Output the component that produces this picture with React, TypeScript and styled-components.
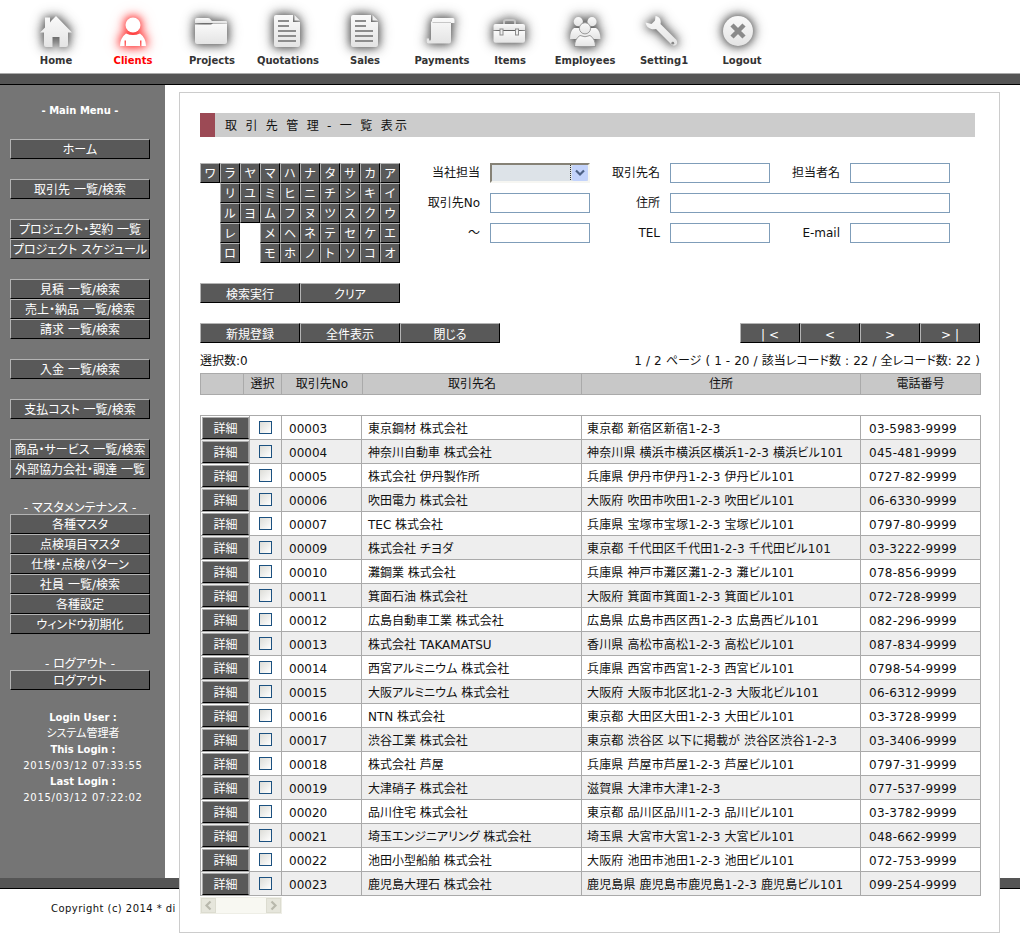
import React, { useId } from "react";
import styled, { createGlobalStyle, css } from "styled-components";

const FONT = `"DejaVu Sans", "Noto Sans CJK JP", sans-serif`;
const PALT = `font-feature-settings: "palt";`;

const Global = createGlobalStyle`
  html, body { margin: 0; padding: 0; background: #fff; overflow: hidden; }
  body { font-family: ${FONT}; font-size: 12px; color: #111; ${PALT} }
`;

const Page = styled.div`
  width: 1020px;
  height: 940px;
  display: flex;
  flex-direction: column;
  overflow: hidden;
`;

const Nav = styled.nav`
  height: 73px;
  flex: none;
  display: flex;
  padding-left: 18px;
  border-bottom: 1px solid #aaa;
`;
const NavItem = styled.a<{ $w: number; $active?: boolean }>`
  width: ${(p) => p.$w}px;
  display: flex;
  flex-direction: column;
  align-items: center;
  padding-top: 8px;
  font: bold 10px ${FONT};
  color: ${(p) => (p.$active ? "#f00" : "#333")};
`;
const NavLabel = styled.span`
  margin-top: -1px;
  line-height: 12px;
  white-space: nowrap;
`;
const IconSvg = styled.svg<{ $active?: boolean }>`
  width: 48px;
  height: 48px;
  overflow: visible;
  filter: ${(p) =>
    p.$active
      ? "drop-shadow(0 0 4px #ff2828) drop-shadow(0 0 6px #ff6464)"
      : "drop-shadow(0 0 4px #5a5a5a) drop-shadow(0 0 6px #909090)"};
`;

const Bar = styled.div`
  height: 10px;
  flex: none;
  background: #555;
  border-bottom: 1px solid #000;
`;
const Body = styled.div`
  flex: none;
  height: 793px;
  display: flex;
  align-items: flex-start;
`;
const Sidebar = styled.aside`
  width: 165px;
  height: 793px;
  flex: none;
  box-sizing: border-box;
  background: #757575;
  padding: 17px 15px 0 10px;
  color: #fff;
  text-align: center;
`;
const SideHead = styled.div`
  height: 17px;
  font: bold 10px/17px ${FONT};
  ${PALT}
  margin-bottom: 20px;
`;
const SideTitle = styled.div<{ $mt: number }>`
  height: 14px;
  line-height: 16px;
  margin-top: ${(p) => p.$mt}px;
  white-space: nowrap;
`;
const MenuGroup = styled.div<{ $mt?: number }>`
  display: flex;
  flex-direction: column;
  margin-top: ${(p) => p.$mt ?? 0}px;
`;
const bevel = css`
  box-sizing: border-box;
  margin: 0;
  padding: 2px 0 0;
  background: #595959;
  color: #fff;
  border: 1px solid;
  border-color: #b4b4b4 #000 #000 #b4b4b4;
  font: 12px ${FONT};
  ${PALT}
  white-space: nowrap;
  text-align: center;
  overflow: hidden;
`;
const MenuButton = styled.button`
  ${bevel}
  width: 140px;
  height: 20px;
  line-height: 17px;
`;
const Info = styled.div`
  margin: 20px 0 0 6px;
  font-size: 11px;
  line-height: 16px;
`;
const InfoHead = styled.div`
  font: bold 10px/16px ${FONT};
`;
const InfoDate = styled.div`
  font-size: 10px;
  letter-spacing: 0.72px;
  white-space: nowrap;
`;

const Panel = styled.main`
  position: relative;
  z-index: 1;
  width: 821px;
  height: 841px;
  margin: 7px 0 0 14px;
  box-sizing: border-box;
  background: #fff;
  border: 1px solid #ccc;
  padding: 20px 0 0 20px;
`;
const Title = styled.h1`
  margin: 0;
  width: 775px;
  height: 24px;
  box-sizing: border-box;
  background: #ccc;
  border-left: 15px solid #9c4a55;
  padding-left: 10px;
  font: normal 12px/26px ${FONT};
  ${PALT}
  letter-spacing: 2.3px;
  color: #111;
`;
const SearchRow = styled.div`
  margin-top: 26px;
  display: flex;
  gap: 20px;
`;
const KanaGrid = styled.div`
  display: grid;
  grid-template-columns: repeat(10, 20px);
  grid-auto-rows: 20px;
  flex: none;
`;
const KanaKey = styled.button`
  ${bevel}
  width: 20px;
  height: 20px;
  line-height: 16px;
`;
const KanaGap = styled.span``;
const FormGrid = styled.div`
  display: grid;
  grid-template-columns: 60px 100px 60px 100px 60px 100px;
  grid-auto-rows: 20px;
  row-gap: 10px;
  column-gap: 10px;
  align-content: start;
`;
const FieldLabel = styled.label`
  text-align: right;
  line-height: 20px;
  white-space: nowrap;
  margin-left: -10px;
`;
const TextInput = styled.input<{ $span?: number }>`
  box-sizing: border-box;
  width: 100%;
  height: 20px;
  margin: 0;
  background: #fff;
  border: 1px solid #7f9db9;
  grid-column: span ${(p) => p.$span ?? 1};
`;
const SelectWrap = styled.div`
  position: relative;
  height: 20px;
`;
const Select = styled.select`
  appearance: none;
  box-sizing: border-box;
  display: block;
  width: 100%;
  height: 20px;
  margin: 0;
  background: #dde3e8;
  border: 2px solid;
  border-color: #868276 #f6f6f2 #f6f6f2 #868276;
  border-radius: 0;
`;
const SelectArrow = styled.svg`
  position: absolute;
  top: 2px;
  right: 2px;
  width: 19px;
  height: 16px;
`;
const ButtonRow = styled.div<{ $mt: number; $split?: boolean }>`
  display: flex;
  width: 780px;
  margin-top: ${(p) => p.$mt}px;
  justify-content: ${(p) => (p.$split ? "space-between" : "flex-start")};
`;
const ButtonGroup = styled.div`
  display: flex;
`;
const ActionButton = styled.button<{ $w?: number }>`
  ${bevel}
  padding-top: 4px;
  width: ${(p) => p.$w ?? 100}px;
  height: 20px;
  line-height: 15px;
`;
const CountRow = styled.div`
  width: 780px;
  height: 20px;
  margin-top: 8px;
  margin-bottom: 2px;
  display: flex;
  justify-content: space-between;
  line-height: 20px;
  white-space: nowrap;
  word-spacing: 0.25px;
`;
const HeadTable = styled.table`
  table-layout: fixed;
  border-collapse: collapse;
  width: 780px;
  height: 21px;
  th {
    background: #c8c8c8;
    border: 1px solid #aaa;
    font: normal 12px/20px ${FONT};
    ${PALT}
    padding: 0;
    height: 20px;
  }
`;
const DataTable = styled.table`
  table-layout: fixed;
  border-collapse: collapse;
  width: 780px;
  margin-top: 20px;
`;
const Row = styled.tr<{ $alt: boolean }>`
  background: ${(p) => (p.$alt ? "#eee" : "#fff")};
  height: 24px;
`;
const Cell = styled.td<{ $pl?: number; $ls?: number }>`
  box-sizing: border-box;
  border: 1px solid #aaa;
  padding: 2px 0 0 ${(p) => p.$pl ?? 0}px;
  height: 24px;
  line-height: 20px;
  letter-spacing: ${(p) => p.$ls ?? 0}px;
  white-space: nowrap;
  overflow: hidden;
`;
const DetailCell = styled(Cell)`
  padding: 0 1px;
  text-align: center;
  line-height: 0;
`;
const DetailButton = styled.button`
  ${bevel}
  display: block;
  width: 47px;
  height: 22px;
  margin: 0;
  padding: 2px 0 0;
  line-height: 18px;
  border-color: #aaa #999 #000 #aaa;
`;
const CheckCell = styled(Cell)`
  padding: 0;
  text-align: center;
  line-height: 0;
`;
const Check = styled.input`
  appearance: none;
  box-sizing: border-box;
  display: inline-block;
  width: 13px;
  height: 13px;
  margin: 0;
  border: 1px solid #1c5180;
  background: linear-gradient(135deg, #dcdcd7, #fff);
`;
const ScrollBar = styled.div`
  width: 82px;
  height: 17px;
  margin-top: 1px;
  display: flex;
  justify-content: space-between;
  align-items: center;
  background: #f8f8f2;
  box-sizing: border-box;
  border: 1px solid #eeeee6;
`;
const ScrollBtn = styled.div`
  width: 15px;
  height: 15px;
  display: flex;
  align-items: center;
  justify-content: center;
  background: #e6e6dc;
  border: 1px solid #dcdcd0;
  box-sizing: border-box;
`;
const ScrollIcon = styled.svg`
  width: 9px;
  height: 11px;
`;
const FooterBar = styled.div`
  height: 10px;
  flex: none;
  background: #555;
  border-bottom: 1px solid #000;
`;
const Copyright = styled.footer`
  padding: 12px 0 0 51px;
  font-size: 10px;
  line-height: 16px;
  letter-spacing: 0.45px;
  white-space: nowrap;
`;

const Icon: React.FC<{ active?: boolean; children: (fill: string) => React.ReactNode }> = ({ active, children }) => {
  const id = useId().replace(/[^a-zA-Z0-9]/g, "");
  return (
    <IconSvg $active={active} viewBox="0 0 48 48">
      <defs>
        <linearGradient id={id} x1="0" y1="0" x2="0" y2="1">
          <stop offset="0" stopColor="#fafafa" />
          <stop offset="1" stopColor="#e4e4e4" />
        </linearGradient>
      </defs>
      {children(`url(#${id})`)}
    </IconSvg>
  );
};

const DocLines: React.FC = () => (
  <g stroke="#8c8c8c" strokeWidth="2">
    <path d="M14 13H25M14 18H25M14 23H32M14 28H32M14 33H32" />
  </g>
);

const icons: Record<string, React.ReactNode> = {
  Home: (
    <Icon>
      {(f) => (
        <path
          fill={f}
          d="M24 8L40 24.5H36V37Q36 39 34 39H27.5V29H20.5V39H14Q12 39 12 37V24.5H8L13 19.5V9.5H18V14.5L19.5 12.5L21 11Z"
        />
      )}
    </Icon>
  ),
  Clients: (
    <Icon active>
      {() => (
        <g fill="#fff">
          <circle cx="24" cy="17" r="7.5" />
          <path d="M11 38Q11 30 17 25.5Q24 28.5 31 25.5Q37 30 37 38H32.5V32.5H31V38H17V32.5H15.5V38Z" />
        </g>
      )}
    </Icon>
  ),
  Projects: (
    <Icon>
      {(f) => (
        <g>
          <path fill={f} d="M9 10H20Q22 10 23 12L24 13H38Q39 13 39 14V15H7V12Q7 10 9 10Z" />
          <path fill={f} d="M7 16.5H23L25 15.5H39V34Q39 36 37 36H9Q7 36 7 34Z" />
        </g>
      )}
    </Icon>
  ),
  Quotations: (
    <Icon>
      {(f) => (
        <g>
          <path fill={f} d="M12 7H29V14H36V37Q36 39 34 39H12Q10 39 10 37V9Q10 7 12 7Z" />
          <path fill="#eee" d="M30.5 7L36 12.5H30.5Z" />
          <DocLines />
        </g>
      )}
    </Icon>
  ),
  Sales: (
    <Icon>
      {(f) => (
        <g>
          <path fill={f} d="M12 7H30V14H37V37Q37 39 35 39H12Q10 39 10 37V9Q10 7 12 7Z" />
          <path fill="#eee" d="M31.5 7L37 12.5H31.5Z" />
          <DocLines />
        </g>
      )}
    </Icon>
  ),
  Payments: (
    <Icon>
      {(f) => (
        <g>
          <path
            fill={f}
            d="M15 10H35Q36.5 10 36.5 12V15H33V33.5Q33 35.5 31 35.5H10.5Q8.7 35.5 8.7 33.5V30.5H11V32.5H12.5Q13 32 13 30.5V14Q14.5 13 14 11.5Z"
          />
          <path fill="none" stroke="#bbb" strokeWidth="0.8" d="M14.5 14.5H33" />
        </g>
      )}
    </Icon>
  ),
  Items: (
    <Icon>
      {(f) => (
        <g>
          <path fill="none" stroke="#c4c4c4" strokeWidth="2" d="M18 16V13.5Q18 12 20 12H27Q29 12 29 13.5V16" />
          <path fill={f} d="M9.5 16H37Q39 16 39 18V22H7.5V18Q7.5 16 9.5 16Z" />
          <path fill={f} d="M7.5 23H39V32.5Q39 34.7 37 34.7H9.5Q7.5 34.7 7.5 32.5Z" />
          <rect x="14" y="21" width="3" height="6" fill="#eee" stroke="#8c8c8c" strokeWidth="1" />
          <rect x="29.5" y="21" width="3" height="6" fill="#eee" stroke="#8c8c8c" strokeWidth="1" />
        </g>
      )}
    </Icon>
  ),
  Employees: (
    <Icon>
      {(f) => (
        <g fill={f}>
          <circle cx="17.3" cy="13.7" r="4.6" />
          <circle cx="31" cy="13.7" r="4.6" />
          <path d="M9 31Q9 23 13 20H21L24 21L27 20H35Q39.5 23 39.5 31Z" />
          <circle cx="24" cy="20.3" r="5.6" stroke="#999" strokeWidth="1" />
          <path d="M13.5 38.5Q13.5 31 19 27.5Q24 30 29 27.5Q34.5 31 34.5 38.5Z" stroke="#999" strokeWidth="1" />
        </g>
      )}
    </Icon>
  ),
  Setting1: (
    <Icon>
      {(f) => (
        <g>
          <path
            fill={f}
            d="M15.5 8C19.5 8.5 21.5 12 20.5 16L36.5 32Q38 35 36 37Q33.5 38.5 31.5 36.5L16 21C11 22 6.5 20 5.5 14.5L11.5 16L15 12.5Z"
          />
          <circle cx="32.8" cy="35.2" r="1.4" fill="#888" />
        </g>
      )}
    </Icon>
  ),
  Logout: (
    <Icon>
      {(f) => (
        <g>
          <circle cx="20" cy="23" r="15" fill={f} />
          <path d="M14 17L26 29M26 17L14 29" stroke="#8a8a8a" strokeWidth="4.5" />
        </g>
      )}
    </Icon>
  ),
};

const navItems: [string, number][] = [
  ["Home", 76],
  ["Clients", 78],
  ["Projects", 80],
  ["Quotations", 72],
  ["Sales", 82],
  ["Payments", 72],
  ["Items", 64],
  ["Employees", 86],
  ["Setting1", 72],
  ["Logout", 84],
];

const kana = [
  "ワラヤマハナタサカア",
  " リユミヒニチシキイ",
  " ルヨムフヌツスクウ",
  " レ メヘネテセケエ",
  " ロ モホノトソコオ",
];

const rows: [string, string, string, string][] = [
  ["00003", "東京鋼材 株式会社", "東京都 新宿区新宿1-2-3", "03-5983-9999"],
  ["00004", "神奈川自動車 株式会社", "神奈川県 横浜市横浜区横浜1-2-3 横浜ビル101", "045-481-9999"],
  ["00005", "株式会社 伊丹製作所", "兵庫県 伊丹市伊丹1-2-3 伊丹ビル101", "0727-82-9999"],
  ["00006", "吹田電力 株式会社", "大阪府 吹田市吹田1-2-3 吹田ビル101", "06-6330-9999"],
  ["00007", "TEC 株式会社", "兵庫県 宝塚市宝塚1-2-3 宝塚ビル101", "0797-80-9999"],
  ["00009", "株式会社 チヨダ", "東京都 千代田区千代田1-2-3 千代田ビル101", "03-3222-9999"],
  ["00010", "灘鋼業 株式会社", "兵庫県 神戸市灘区灘1-2-3 灘ビル101", "078-856-9999"],
  ["00011", "箕面石油 株式会社", "大阪府 箕面市箕面1-2-3 箕面ビル101", "072-728-9999"],
  ["00012", "広島自動車工業 株式会社", "広島県 広島市西区西1-2-3 広島西ビル101", "082-296-9999"],
  ["00013", "株式会社 TAKAMATSU", "香川県 高松市高松1-2-3 高松ビル101", "087-834-9999"],
  ["00014", "西宮アルミニウム 株式会社", "兵庫県 西宮市西宮1-2-3 西宮ビル101", "0798-54-9999"],
  ["00015", "大阪アルミニウム 株式会社", "大阪府 大阪市北区北1-2-3 大阪北ビル101", "06-6312-9999"],
  ["00016", "NTN 株式会社", "東京都 大田区大田1-2-3 大田ビル101", "03-3728-9999"],
  ["00017", "渋谷工業 株式会社", "東京都 渋谷区 以下に掲載が 渋谷区渋谷1-2-3", "03-3406-9999"],
  ["00018", "株式会社 芦屋", "兵庫県 芦屋市芦屋1-2-3 芦屋ビル101", "0797-31-9999"],
  ["00019", "大津硝子 株式会社", "滋賀県 大津市大津1-2-3", "077-537-9999"],
  ["00020", "品川住宅 株式会社", "東京都 品川区品川1-2-3 品川ビル101", "03-3782-9999"],
  ["00021", "埼玉エンジニアリング 株式会社", "埼玉県 大宮市大宮1-2-3 大宮ビル101", "048-662-9999"],
  ["00022", "池田小型船舶 株式会社", "大阪府 池田市池田1-2-3 池田ビル101", "072-753-9999"],
  ["00023", "鹿児島大理石 株式会社", "鹿児島県 鹿児島市鹿児島1-2-3 鹿児島ビル101", "099-254-9999"],
];

const menuGroups: [number, string[]][] = [
  [0, ["ホーム"]],
  [20, ["取引先 一覧/検索"]],
  [20, ["プロジェクト・契約 一覧", "プロジェクト スケジュール"]],
  [20, ["見積 一覧/検索", "売上・納品 一覧/検索", "請求 一覧/検索"]],
  [20, ["入金 一覧/検索"]],
  [20, ["支払コスト 一覧/検索"]],
  [20, ["商品・サービス 一覧/検索", "外部協力会社・調達 一覧"]],
];
const masterMenu = ["各種マスタ", "点検項目マスタ", "仕様・点検パターン", "社員 一覧/検索", "各種設定", "ウィンドウ初期化"];

const Chevron: React.FC<{ d: string }> = ({ d }) => (
  <ScrollIcon viewBox="0 0 9 11">
    <path d={d} fill="none" stroke="#b8b8ac" strokeWidth="2.2" />
  </ScrollIcon>
);

export default function App() {
  return (
    <Page>
      <Global />
      <Nav>
        {navItems.map(([name, w]) => (
          <NavItem key={name} $w={w} $active={name === "Clients"}>
            {icons[name]}
            <NavLabel>{name}</NavLabel>
          </NavItem>
        ))}
      </Nav>
      <Bar />
      <Body>
        <Sidebar>
          <SideHead>- Main Menu -</SideHead>
          {menuGroups.map(([mt, items]) => (
            <MenuGroup key={items[0]} $mt={mt}>
              {items.map((t) => (
                <MenuButton key={t}>{t}</MenuButton>
              ))}
            </MenuGroup>
          ))}
          <SideTitle $mt={21}>- マスタメンテナンス -</SideTitle>
          <MenuGroup>
            {masterMenu.map((t) => (
              <MenuButton key={t}>{t}</MenuButton>
            ))}
          </MenuGroup>
          <SideTitle $mt={22}>- ログアウト -</SideTitle>
          <MenuGroup>
            <MenuButton>ログアウト</MenuButton>
          </MenuGroup>
          <Info>
            <InfoHead>Login User :</InfoHead>
            <div>システム管理者</div>
            <InfoHead>This Login :</InfoHead>
            <InfoDate>2015/03/12 07:33:55</InfoDate>
            <InfoHead>Last Login :</InfoHead>
            <InfoDate>2015/03/12 07:22:02</InfoDate>
          </Info>
        </Sidebar>
        <Panel>
          <Title>取 引 先 管 理 - 一 覧 表示</Title>
          <SearchRow>
            <KanaGrid>
              {kana.flatMap((line, r) =>
                Array.from(line).map((c, i) =>
                  c === " " ? <KanaGap key={`${r}-${i}`} /> : <KanaKey key={`${r}-${i}`}>{c}</KanaKey>
                )
              )}
            </KanaGrid>
            <FormGrid>
              <FieldLabel>当社担当</FieldLabel>
              <SelectWrap>
                <Select aria-label="当社担当" />
                <SelectArrow viewBox="0 0 19 16">
                  <path d="M1.5 0V16" stroke="#333" strokeDasharray="1 1" />
                  <rect x="3" y="0" width="16" height="16" rx="2" fill="#c3d3fb" />
                  <path d="M7 5.5L11 9.5L15 5.5" fill="none" stroke="#4d6185" strokeWidth="2.2" />
                </SelectArrow>
              </SelectWrap>
              <FieldLabel>取引先名</FieldLabel>
              <TextInput />
              <FieldLabel>担当者名</FieldLabel>
              <TextInput />
              <FieldLabel>取引先No</FieldLabel>
              <TextInput />
              <FieldLabel>住所</FieldLabel>
              <TextInput $span={3} />
              <FieldLabel>～</FieldLabel>
              <TextInput />
              <FieldLabel>TEL</FieldLabel>
              <TextInput />
              <FieldLabel>E-mail</FieldLabel>
              <TextInput />
            </FormGrid>
          </SearchRow>
          <ButtonRow $mt={20}>
            <ActionButton>検索実行</ActionButton>
            <ActionButton>クリア</ActionButton>
          </ButtonRow>
          <ButtonRow $mt={20} $split>
            <ButtonGroup>
              <ActionButton>新規登録</ActionButton>
              <ActionButton>全件表示</ActionButton>
              <ActionButton>閉じる</ActionButton>
            </ButtonGroup>
            <ButtonGroup>
              <ActionButton $w={60}>| &lt;</ActionButton>
              <ActionButton $w={60}>&lt;</ActionButton>
              <ActionButton $w={60}>&gt;</ActionButton>
              <ActionButton $w={60}>&gt; |</ActionButton>
            </ButtonGroup>
          </ButtonRow>
          <CountRow>
            <span>選択数:0</span>
            <span>1 / 2 ページ ( 1 - 20 / 該当レコード数 : 22 / 全レコード数: 22 )</span>
          </CountRow>
          <HeadTable>
            <colgroup>
              <col width="43" />
              <col width="38" />
              <col width="81" />
              <col width="219" />
              <col width="279" />
              <col width="120" />
            </colgroup>
            <thead>
              <tr>
                <th />
                <th>選択</th>
                <th>取引先No</th>
                <th>取引先名</th>
                <th>住所</th>
                <th>電話番号</th>
              </tr>
            </thead>
          </HeadTable>
          <DataTable>
            <colgroup>
              <col width="49" />
              <col width="32" />
              <col width="80" />
              <col width="220" />
              <col width="279" />
              <col width="120" />
            </colgroup>
            <tbody>
              {rows.map((r, i) => (
                <Row key={r[0]} $alt={i % 2 === 1}>
                  <DetailCell>
                    <DetailButton>詳細</DetailButton>
                  </DetailCell>
                  <CheckCell>
                    <Check type="checkbox" aria-label={r[0]} />
                  </CheckCell>
                  <Cell $pl={7}>{r[0]}</Cell>
                  <Cell $pl={6}>{r[1]}</Cell>
                  <Cell $pl={5} $ls={0.15}>{r[2]}</Cell>
                  <Cell $pl={8} $ls={0.25}>{r[3]}</Cell>
                </Row>
              ))}
            </tbody>
          </DataTable>
          <ScrollBar>
            <ScrollBtn>
              <Chevron d="M6.5 1.5L2.5 5.5L6.5 9.5" />
            </ScrollBtn>
            <ScrollBtn>
              <Chevron d="M2.5 1.5L6.5 5.5L2.5 9.5" />
            </ScrollBtn>
          </ScrollBar>
        </Panel>
      </Body>
      <FooterBar />
      <Copyright>Copyright (c) 2014 * di</Copyright>
    </Page>
  );
}
